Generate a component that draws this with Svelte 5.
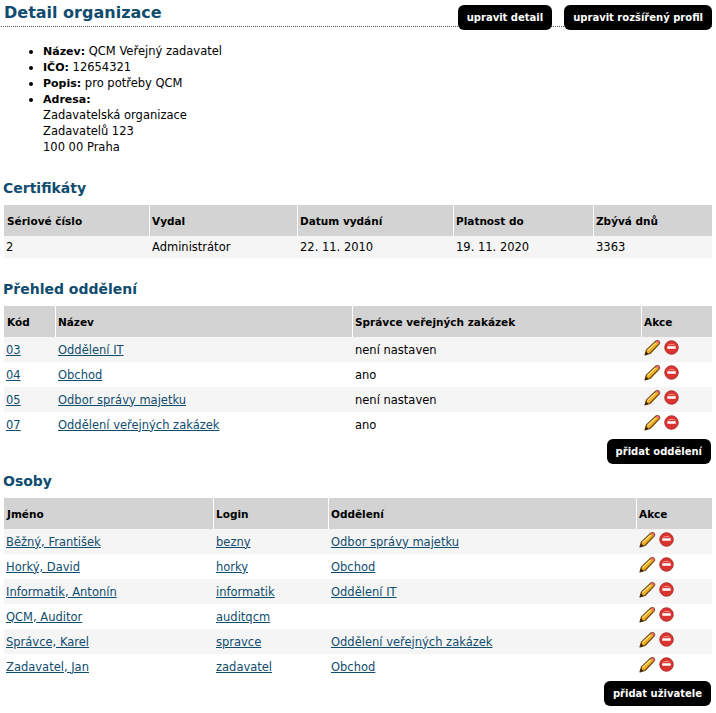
<script>
  const info = [
    { label: "Název:", value: "QCM Veřejný zadavatel" },
    { label: "IČO:", value: "12654321" },
    { label: "Popis:", value: "pro potřeby QCM" }
  ];
  const departments = [
    ["03", "Oddělení IT", "není nastaven"],
    ["04", "Obchod", "ano"],
    ["05", "Odbor správy majetku", "není nastaven"],
    ["07", "Oddělení veřejných zakázek", "ano"]
  ];
  const people = [
    ["Běžný, František", "bezny", "Odbor správy majetku"],
    ["Horký, David", "horky", "Obchod"],
    ["Informatik, Antonín", "informatik", "Oddělení IT"],
    ["QCM, Auditor", "auditqcm", ""],
    ["Správce, Karel", "spravce", "Oddělení veřejných zakázek"],
    ["Zadavatel, Jan", "zadavatel", "Obchod"]
  ];
</script>

{#snippet actions()}
  <span class="actions">
    <svg width="17" height="17" viewBox="0 0 17 17">
      <path d="M1 16 L2.5 11 L12 2 Q13.5 1 15 2.3 Q16.3 3.8 15 5.2 L6 14.5 Z" fill="#f2ac1e" stroke="#6e4508" stroke-width="1.2" stroke-linejoin="round"/>
      <path d="M11.5 2.6 Q13.8 3 14.6 5.6 L15.4 4.8 Q16 3.4 14.8 2.2 Q13.4 1 12.2 2 Z" fill="#e8607a"/>
      <path d="M3.5 11.5 L11.5 4" stroke="#ffe28a" stroke-width="1.2"/>
      <path d="M1 16 L2 12.6 L4.6 15 Z" fill="#2e2010"/>
    </svg>
    <svg width="15" height="15" viewBox="0 0 16 16">
      <circle cx="8" cy="8" r="7.2" fill="#d9342f" stroke="#b02a26" stroke-width="1"/>
      <path d="M3 6 Q8 2 13 6 Q8 4.6 3 6 Z" fill="#f28a80"/>
      <rect x="3.5" y="6.6" width="9" height="2.8" rx="0.6" fill="#fff"/>
    </svg>
  </span>
{/snippet}

<div class="page">
  <header class="title">
    <h1>Detail organizace</h1>
    <div class="top-buttons">
      <a class="btn" href="#detail">upravit detail</a>
      <a class="btn" href="#profil">upravit rozšířený profil</a>
    </div>
  </header>

  <ul class="info">
    {#each info as row}
      <li><b>{row.label}</b> {row.value}</li>
    {/each}
    <li>
      <b>Adresa:</b><br />
      Zadavatelská organizace<br />
      Zadavatelů 123<br />
      100 00 Praha
    </li>
  </ul>

  <h2 class="first">Certifikáty</h2>
  <table class="certs">
    <colgroup>
      <col style="width:145px" /><col style="width:148px" /><col style="width:156px" /><col style="width:140px" /><col />
    </colgroup>
    <thead>
      <tr><th>Sériové číslo</th><th>Vydal</th><th>Datum vydání</th><th>Platnost do</th><th>Zbývá dnů</th></tr>
    </thead>
    <tbody>
      <tr><td>2</td><td>Administrátor</td><td>22. 11. 2010</td><td>19. 11. 2020</td><td>3363</td></tr>
    </tbody>
  </table>

  <h2>Přehled oddělení</h2>
  <table class="rows">
    <colgroup>
      <col style="width:51px" /><col style="width:297px" /><col style="width:289px" /><col />
    </colgroup>
    <thead>
      <tr><th>Kód</th><th>Název</th><th>Správce veřejných zakázek</th><th>Akce</th></tr>
    </thead>
    <tbody>
      {#each departments as d}
        <tr>
          <td><a href="#kod">{d[0]}</a></td>
          <td><a href="#nazev">{d[1]}</a></td>
          <td>{d[2]}</td>
          <td>{@render actions()}</td>
        </tr>
      {/each}
    </tbody>
  </table>
  <div class="add"><a class="btn" href="#pridat">přidat oddělení</a></div>

  <h2 class="persons">Osoby</h2>
  <table class="rows">
    <colgroup>
      <col style="width:209px" /><col style="width:115px" /><col style="width:308px" /><col />
    </colgroup>
    <thead>
      <tr><th>Jméno</th><th>Login</th><th>Oddělení</th><th>Akce</th></tr>
    </thead>
    <tbody>
      {#each people as p}
        <tr>
          <td><a href="#jmeno">{p[0]}</a></td>
          <td><a href="#login">{p[1]}</a></td>
          <td><a href="#oddeleni">{p[2]}</a></td>
          <td>{@render actions()}</td>
        </tr>
      {/each}
    </tbody>
  </table>
  <div class="add"><a class="btn" href="#pridat">přidat uživatele</a></div>
</div>

<style>
  :global(body) {
    margin: 0;
    background: #fff;
  }

  .page {
    padding: 0 4px;
    font-family: "DejaVu Sans", sans-serif;
    font-size: 11.5px;
    line-height: 16px;
    color: #000;
  }

  .title {
    display: flex;
    justify-content: space-between;
    align-items: flex-start;
    height: 26px;
    margin-left: -3px;
    padding-left: 3px;
    border-bottom: 1px dotted #555;
  }

  h1 {
    margin: 0;
    font-size: 16px;
    line-height: 26px;
    font-weight: bold;
    color: #0f4c6e;
  }

  .top-buttons {
    display: flex;
    gap: 12px;
    padding-top: 5px;
  }

  .btn {
    display: block;
    box-sizing: border-box;
    height: 25px;
    padding: 0 9px;
    border-radius: 6px;
    background: #000;
    color: #fff;
    font-size: 10px;
    font-weight: bold;
    line-height: 25px;
    text-decoration: none;
  }

  .info {
    margin: 16px 0 0;
    padding: 0 0 0 39px;
    list-style: disc;
  }

  b {
    font-size: 11px;
    line-height: 0;
  }

  h2 {
    margin: 0 0 7px -1px;
    font-size: 14px;
    line-height: 20px;
    font-weight: bold;
    color: #0f4c6e;
  }

  h2.first {
    margin-top: 23px;
  }

  h2:not(.first) {
    margin-top: 21px;
  }

  h2.persons {
    margin-top: 7px;
  }

  table {
    width: 708px;
    table-layout: fixed;
    border-collapse: separate;
    border-spacing: 0;
  }

  th {
    height: 31px;
    padding: 0 0 0 2px;
    background: #d3d3d3;
    border-left: 1px solid #fff;
    font-size: 10.5px;
    text-align: left;
  }

  th:first-child {
    padding-left: 3px;
    border-left: 0;
  }

  td {
    padding: 0 0 0 2px;
    border-left: 1px solid transparent;
    white-space: nowrap;
  }

  td:first-child {
    border-left: 0;
  }

  .certs td {
    height: 22px;
  }

  .certs tbody tr {
    background: #f5f5f5;
  }

  .rows td {
    height: 25px;
  }

  .rows tbody tr:nth-child(odd) {
    background: #f5f5f5;
  }

  a {
    color: #0f4c6e;
  }

  .actions {
    display: flex;
    gap: 3px;
    align-items: center;
    margin-bottom: 4px;
  }

  .add {
    display: flex;
    justify-content: flex-end;
    padding: 2px 1px 0 0;
  }
</style>
